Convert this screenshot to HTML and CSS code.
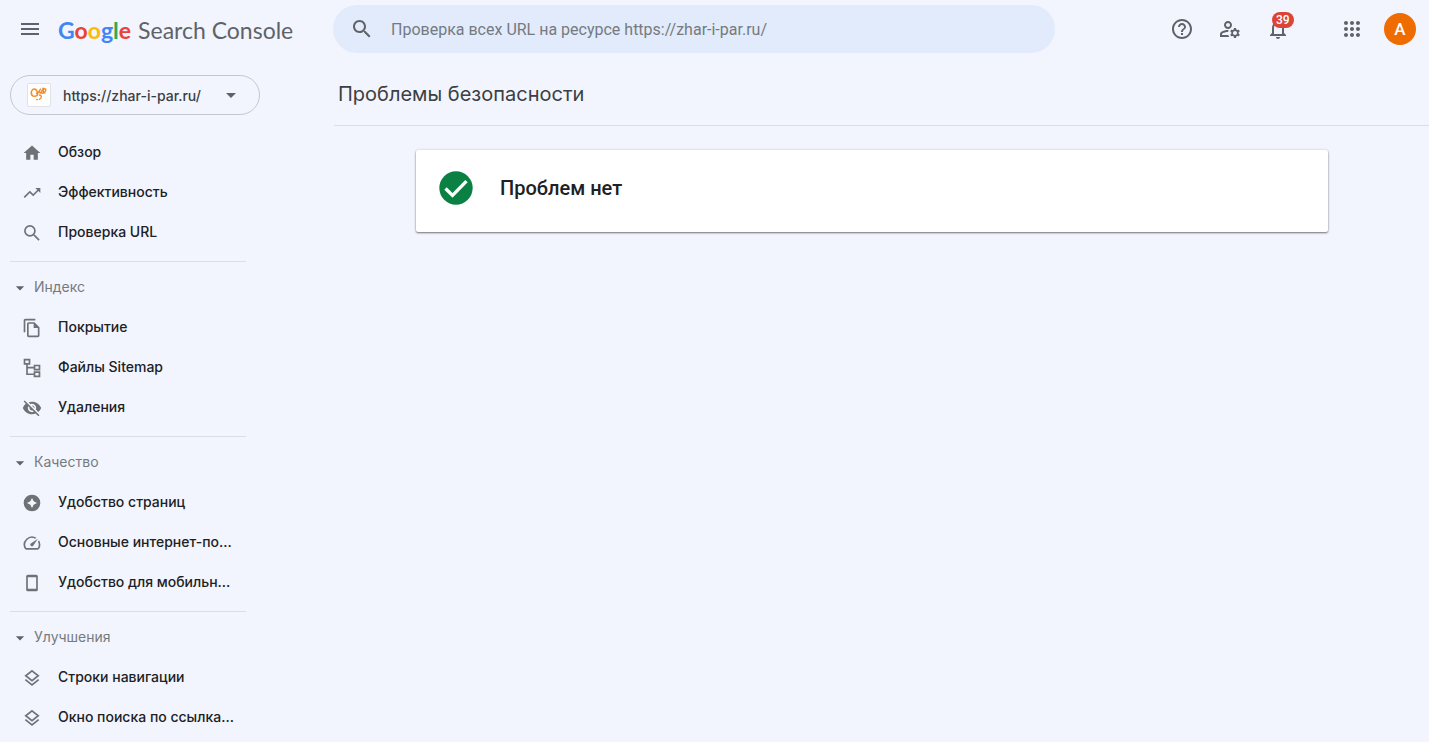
FILE: index.html
```html
<!DOCTYPE html>
<html lang="ru">
<head>
    <meta charset="UTF-8">
    <meta name="viewport" content="width=device-width, initial-scale=1.0">
    <title>Проблемы безопасности</title>
    <link rel="stylesheet" href="styles.css">
</head>
<body>
    <header class="topbar">
        <div class="brand">
            <button type="button" class="menu-btn" aria-label="Меню">
                <svg viewBox="0 0 24 24"><path d="M3 18h18v-2H3v2zm0-5h18v-2H3v2zm0-7v2h18V6H3z"/></svg>
            </button>
            <a href="#" class="logo"><span class="google"><span class="blue">G</span><span class="red">o</span><span class="yellow">o</span><span class="blue">g</span><span class="green">l</span><span class="red">e</span></span><span class="product">Search Console</span></a>
        </div>

        <form class="search">
            <label for="search" aria-label="Поиск">
                <svg viewBox="0 0 24 24"><path d="M15.5 14h-.79l-.28-.27C15.41 12.59 16 11.11 16 9.5 16 5.91 13.09 3 9.5 3S3 5.91 3 9.5 5.91 16 9.5 16c1.61 0 3.09-.59 4.23-1.57l.27.28v.79l5 4.99L20.49 19l-4.99-5zm-6 0C7.01 14 5 11.99 5 9.5S7.01 5 9.5 5 14 7.01 14 9.5 11.99 14 9.5 14z"/></svg>
            </label>
            <input type="text" id="search" placeholder="Проверка всех URL на ресурсе https://zhar-i-par.ru/">
        </form>

        <div class="actions">
            <button type="button" class="icon-btn" aria-label="Справка">
                <svg viewBox="0 0 24 24"><path d="M11 18h2v-2h-2v2zm1-16C6.48 2 2 6.48 2 12s4.48 10 10 10 10-4.48 10-10S17.52 2 12 2zm0 18c-4.41 0-8-3.59-8-8s3.59-8 8-8 8 3.59 8 8-3.59 8-8 8zm0-14c-2.21 0-4 1.79-4 4h2c0-1.1.9-2 2-2s2 .9 2 2c0 2-3 1.75-3 5h2c0-2.25 3-2.5 3-5 0-2.21-1.79-4-4-4z"/></svg>
            </button>
            <button type="button" class="icon-btn" aria-label="Пользователи">
                <svg viewBox="0 0 24 24"><path d="M4 18v-.65c0-.34.16-.66.41-.81C6.1 15.53 8.03 15 10 15c.03 0 .05 0 .08.01.1-.7.3-1.37.59-1.98-.22-.02-.44-.03-.67-.03-2.42 0-4.68.67-6.61 1.82-.88.52-1.39 1.5-1.39 2.53V20h9.26c-.42-.6-.75-1.28-.97-2H4zM10 12c2.21 0 4-1.79 4-4s-1.79-4-4-4-4 1.79-4 4 1.79 4 4 4zm0-6c1.1 0 2 .9 2 2s-.9 2-2 2-2-.9-2-2 .9-2 2-2zM20.75 16c0-.22-.03-.42-.06-.63l1.14-1.01-1-1.73-1.45.49c-.32-.27-.68-.48-1.08-.63L18 11h-2l-.3 1.49c-.4.15-.76.36-1.08.63l-1.45-.49-1 1.73 1.14 1.01c-.03.21-.06.41-.06.63s.03.42.06.63l-1.14 1.01 1 1.73 1.45-.49c.32.27.68.48 1.08.63L16 21h2l.3-1.49c.4-.15.76-.36 1.08-.63l1.45.49 1-1.73-1.14-1.01c.03-.21.06-.41.06-.63zM17 18c-1.1 0-2-.9-2-2s.9-2 2-2 2 .9 2 2-.9 2-2 2z"/></svg>
            </button>
            <button type="button" class="icon-btn" aria-label="Уведомления">
                <svg viewBox="0 0 24 24"><path d="M12 22c1.1 0 2-.9 2-2h-4c0 1.1.9 2 2 2zm6-6v-5c0-3.07-1.63-5.64-4.5-6.32V4c0-.83-.67-1.5-1.5-1.5s-1.5.67-1.5 1.5v.68C7.64 5.36 6 7.92 6 11v5l-2 2v1h16v-1l-2-2zm-2 1H8v-6c0-2.48 1.51-4.5 4-4.5s4 2.02 4 4.5v6z"/></svg>
                <span class="badge">39</span>
            </button>
            <button type="button" class="icon-btn apps" aria-label="Приложения">
                <svg viewBox="0 0 24 24"><path d="M6 8c1.1 0 2-.9 2-2s-.9-2-2-2-2 .9-2 2 .9 2 2 2zm6 12c1.1 0 2-.9 2-2s-.9-2-2-2-2 .9-2 2 .9 2 2 2zm-6 0c1.1 0 2-.9 2-2s-.9-2-2-2-2 .9-2 2 .9 2 2 2zm0-6c1.1 0 2-.9 2-2s-.9-2-2-2-2 .9-2 2 .9 2 2 2zm6 0c1.1 0 2-.9 2-2s-.9-2-2-2-2 .9-2 2 .9 2 2 2zm4-8c0 1.1.9 2 2 2s2-.9 2-2-.9-2-2-2-2 .9-2 2zm-4 2c1.1 0 2-.9 2-2s-.9-2-2-2-2 .9-2 2 .9 2 2 2zm6 6c1.1 0 2-.9 2-2s-.9-2-2-2-2 .9-2 2 .9 2 2 2zm0 6c1.1 0 2-.9 2-2s-.9-2-2-2-2 .9-2 2 .9 2 2 2z"/></svg>
            </button>
            <button type="button" class="avatar">A</button>
        </div>
    </header>

    <div class="layout">
        <aside class="sidebar">
            <button type="button" class="property">
                <svg class="favicon" viewBox="0 0 24 24"><path d="M9 6C4 4 2 10 5 13c2 1 5 0 6-2M8 6c3 1 2 4 1 5M10 11l4-6M12 8c1 1 1 2 2 2l3-6M14 8c1 2 2 3 4 1 2-2 2-4 0-4-2 1-2 5 1 5M12 12c3 0 4 3 0 5M9 17h2"/></svg>
                <span class="property-name">https://zhar-i-par.ru/</span>
                <svg class="caret" viewBox="0 0 24 24"><path d="M7 10l5 5 5-5z"/></svg>
            </button>

            <nav>
                <ul class="nav-group">
                    <li><a href="#"><svg viewBox="0 0 24 24"><path d="M10 20v-6h4v6h5v-8h3L12 3 2 12h3v8z"/></svg>Обзор</a></li>
                    <li><a href="#"><svg viewBox="0 0 24 24"><path d="M16 6l2.29 2.29-4.88 4.88-4-4L2 16.59 3.41 18l6-6 4 4 6.3-6.29L22 12V6z"/></svg>Эффективность</a></li>
                    <li><a href="#"><svg class="outline" viewBox="0 0 24 24"><path d="M9.500 3.500a6 6 0 1 1 0 12 6 6 0 0 1 0-12zM14 14l6.500 6.500"/></svg>Проверка URL</a></li>
                </ul>

                <button type="button" class="nav-title"><svg viewBox="0 0 24 24"><path d="M7 10l5 5 5-5z"/></svg>Индекс</button>
                <ul class="nav-group">
                    <li><a href="#"><svg viewBox="0 0 24 24"><path d="M16 1H4c-1.1 0-2 .9-2 2v14h2V3h12V1zm-1 4H8c-1.1 0-2 .9-2 2v14c0 1.1.9 2 2 2h11c1.1 0 2-.9 2-2V11l-6-6zM8 21V7h6v5h5v9H8z"/></svg>Покрытие</a></li>
                    <li><a href="#"><svg class="outline" viewBox="0 0 24 24"><path d="M3 2h6v5H3zM15 9h6v5h-6zM15 17h6v5h-6zM6 7v12.5h9M6 11.5h9"/></svg>Файлы Sitemap</a></li>
                    <li><a href="#"><svg viewBox="0 0 24 24"><path d="M12 7c2.76 0 5 2.24 5 5 0 .65-.13 1.26-.36 1.83l2.92 2.92c1.51-1.26 2.7-2.89 3.43-4.75-1.73-4.39-6-7.5-11-7.5-1.4 0-2.74.25-3.98.7l2.16 2.16C10.74 7.13 11.35 7 12 7zM2 4.27l2.28 2.28.46.46C3.08 8.3 1.78 10.02 1 12c1.73 4.39 6 7.5 11 7.5 1.55 0 3.03-.3 4.38-.84l.42.42L19.73 22 21 20.73 3.27 3 2 4.27zM7.53 9.8l1.55 1.55c-.05.21-.08.43-.08.65 0 1.66 1.34 3 3 3 .22 0 .44-.03.65-.08l1.55 1.55c-.67.33-1.41.53-2.2.53-2.76 0-5-2.24-5-5 0-.79.2-1.53.53-2.2zm4.31-.78l3.15 3.15.02-.16c0-1.66-1.34-3-3-3l-.17.01z"/></svg>Удаления</a></li>
                </ul>

                <button type="button" class="nav-title"><svg viewBox="0 0 24 24"><path d="M7 10l5 5 5-5z"/></svg>Качество</button>
                <ul class="nav-group">
                    <li><a href="#"><svg viewBox="0 0 24 24"><path fill-rule="evenodd" d="M12 2a10 10 0 1 0 0 20 10 10 0 0 0 0-20zm0 4l2 4 4 2-4 2-2 4-2-4-4-2 4-2z"/></svg>Удобство страниц</a></li>
                    <li><a href="#"><svg viewBox="0 0 24 24"><path d="M20.38 8.57l-1.23 1.85a8 8 0 0 1-.22 7.58H5.07A8 8 0 0 1 15.58 6.85l1.85-1.23A10 10 0 0 0 3.35 19a2 2 0 0 0 1.72 1h13.85a2 2 0 0 0 1.74-1 10 10 0 0 0-.27-10.44zm-9.79 6.84a2 2 0 0 0 2.83 0l5.66-8.49-8.49 5.66a2 2 0 0 0 0 2.83z"/></svg>Основные интернет-по...</a></li>
                    <li><a href="#"><svg viewBox="0 0 24 24"><path fill-rule="evenodd" d="M7 2h10a2 2 0 0 1 2 2v16a2 2 0 0 1-2 2H7a2 2 0 0 1-2-2V4a2 2 0 0 1 2-2zm0 3v14h10V5z"/></svg>Удобство для мобильн...</a></li>
                </ul>

                <button type="button" class="nav-title"><svg viewBox="0 0 24 24"><path d="M7 10l5 5 5-5z"/></svg>Улучшения</button>
                <ul class="nav-group">
                    <li><a href="#"><svg class="outline" viewBox="0 0 24 24"><path d="M12 3.5l7.5 5.8-7.5 5.8-7.5-5.8zM4 14l8 6.2 8-6.2"/></svg>Строки навигации</a></li>
                    <li><a href="#"><svg class="outline" viewBox="0 0 24 24"><path d="M12 3.5l7.5 5.8-7.5 5.8-7.5-5.8zM4 14l8 6.2 8-6.2"/></svg>Окно поиска по ссылка...</a></li>
                </ul>
            </nav>
        </aside>

        <main>
            <h1>Проблемы безопасности</h1>
            <div class="content">
                <section class="card">
                    <svg viewBox="0 0 24 24"><circle cx="12" cy="12" r="10"/><path d="M5.7 12.300l4.200 4.200 8.400-8.600"/></svg>
                    <h2>Проблем нет</h2>
                </section>
            </div>
        </main>
    </div>
</body>
</html>
```

FILE: styles.css
```css
:root {
    --bg: #f2f5fd;
    --search: #e1ebfc;
    --line: #dadfe5;
    --icon: #5f6368;
    --muted: #757a80;
    --text: #202124;
}

* {
    box-sizing: border-box;
    margin: 0;
    padding: 0;
}

body {
    background-color: var(--bg);
    color: var(--text);
    font-family: Inter, Roboto, sans-serif;
    font-size: 14px;
    height: 100vh;
    overflow: hidden;
}

button {
    background: none;
    border: none;
    font: inherit;
    cursor: pointer;
}

a {
    color: inherit;
    text-decoration: none;
}

svg {
    width: 24px;
    height: 24px;
    fill: var(--icon);
    display: block;
    flex-shrink: 0;
}

/* Top bar */
.topbar {
    display: flex;
    align-items: center;
    height: 58px;
    padding-right: 13px;
}

.brand {
    display: flex;
    align-items: center;
    flex: 0 0 333px;
}

.menu-btn {
    padding: 0 16px 0 18px;
}

.logo {
    display: flex;
    gap: 7px;
    padding-top: 2px;
    font-family: Lato, sans-serif;
    font-size: 23px;
    line-height: 32px;
    color: var(--icon);
    white-space: nowrap;
}

.google {
    font-weight: 700;
}

.blue { color: #4285f4; }
.red { color: #ea4335; }
.yellow { color: #fbbc04; }
.green { color: #34a853; }

.search {
    display: flex;
    align-items: center;
    flex: 0 1 722px;
    height: 48px;
    padding: 0 17px;
    border-radius: 24px;
    background-color: var(--search);
}

.search input {
    flex: 1;
    min-width: 0;
    margin-left: 17px;
    border: none;
    outline: none;
    background: none;
    font-family: Roboto, sans-serif;
    font-size: 16px;
    color: var(--text);
}

.search input::placeholder {
    color: var(--muted);
    opacity: 1;
}

.actions {
    display: flex;
    align-items: center;
    margin-left: auto;
}

.icon-btn {
    position: relative;
    padding: 12px;
}

.apps {
    margin: 0 8px 0 26px;
}

.badge {
    position: absolute;
    top: 7px;
    left: 18px;
    padding: 0 4px;
    border-radius: 8px;
    background-color: #db4437;
    color: white;
    font-family: Roboto, sans-serif;
    font-size: 12px;
    font-weight: 500;
    line-height: 16px;
}

.avatar {
    width: 32px;
    height: 32px;
    border-radius: 50%;
    background-color: #ef6c00;
    color: white;
    font-family: Roboto, sans-serif;
    font-size: 17px;
    font-weight: 500;
}

/* Sidebar */
.layout {
    display: flex;
}

.sidebar {
    flex: 0 0 334px;
    padding: 17px 74px 0 10px;
}

.property {
    display: flex;
    align-items: center;
    width: 100%;
    height: 40px;
    padding: 0 16px;
    border: 1px solid #c4c7cc;
    border-radius: 20px;
    color: #3c4043;
    font-weight: 500;
}

.favicon {
    background: white;
    border: 1px solid #e0e2e6;
    border-radius: 2px;
    fill: none;
    stroke: #f28c28;
    stroke-width: 1.5;
}

.property-name {
    flex: 1;
    margin-left: 12px;
    text-align: left;
}

nav {
    margin-top: 17px;
    padding-right: 14px;
}

.nav-group {
    list-style: none;
}

.nav-group a {
    display: flex;
    align-items: center;
    gap: 16px;
    height: 40px;
    padding: 0 0 2px 12px;
    font-weight: 500;
    white-space: nowrap;
}

.nav-group svg {
    width: 20px;
    height: 20px;
    margin-top: 4px;
    fill: #6e7277;
}

.nav-group .outline {
    fill: none;
    stroke: #6e7277;
    stroke-width: 2;
}

.nav-title {
    display: flex;
    align-items: center;
    gap: 4px;
    width: 100%;
    height: 55px;
    padding-top: 14px;
    color: var(--muted);
    background: linear-gradient(var(--line), var(--line)) 0 9px / 100% 1px no-repeat;
}

.nav-title svg {
    width: 20px;
    height: 20px;
    margin-top: 2px;
}

/* Main */
main {
    flex: 1;
    min-width: 0;
}

h1 {
    padding: 22px 4px 17px;
    border-bottom: 1px solid var(--line);
    color: #3c4043;
    font-size: 20px;
    font-weight: 400;
    line-height: 28px;
}

.content {
    padding: 24px 19px 24px 0;
}

.card {
    display: flex;
    align-items: center;
    gap: 24px;
    max-width: 912px;
    margin: 0 auto;
    padding: 18px 20px 24px;
    border-radius: 2px;
    background-color: white;
    box-shadow: 0 1px 2px rgba(0, 0, 0, 0.5), 0 0 3px rgba(0, 0, 0, 0.12);
}

.card svg {
    width: 40px;
    height: 40px;
    fill: #0b8043;
}

.card path {
    fill: none;
    stroke: white;
    stroke-width: 2;
}

h2 {
    font-family: Roboto, sans-serif;
    font-size: 20px;
    font-weight: 500;
    line-height: 28px;
}
```
